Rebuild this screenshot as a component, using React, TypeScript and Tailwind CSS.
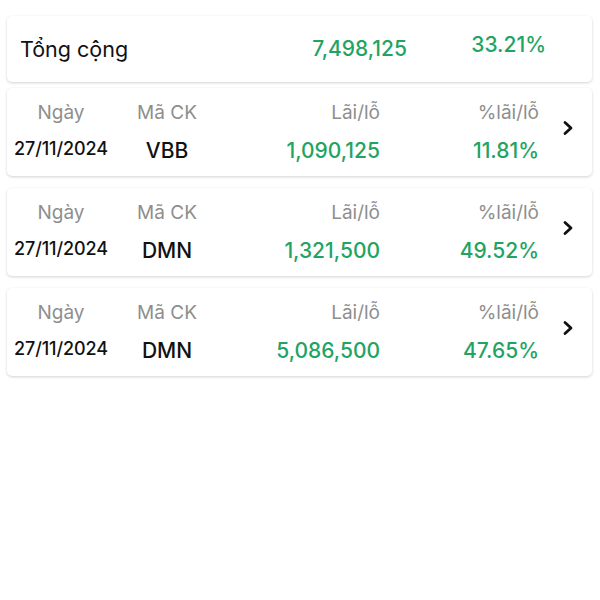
import React from "react";

type Row = {
  date: string;
  code: string;
  pnl: string;
  pct: string;
};

const rows: Row[] = [
  { date: "27/11/2024", code: "VBB", pnl: "1,090,125", pct: "11.81%" },
  { date: "27/11/2024", code: "DMN", pnl: "1,321,500", pct: "49.52%" },
  { date: "27/11/2024", code: "DMN", pnl: "5,086,500", pct: "47.65%" },
];

const Chevron = () => (
  <svg width="12" height="16" viewBox="0 0 12 16" fill="none">
    <polyline
      points="3,2.5 9,8 3,13.5"
      stroke="#111"
      strokeWidth="2.8"
      strokeLinecap="round"
      strokeLinejoin="round"
    />
  </svg>
);

const Card = ({ children, className = "" }: { children: React.ReactNode; className?: string }) => (
  <div className={`ml-[7px] w-[585px] rounded-[5px] bg-white shadow-[0_1px_3px_rgba(0,0,0,0.18)] ${className}`}>
    {children}
  </div>
);

const TradeRow = ({ row }: { row: Row }) => (
  <Card className="flex h-[88px]">
    {/* labels + values */}
    <div className="flex flex-col pt-[12px]">
      <div className="flex h-[26px] items-center text-[19px] text-[#8e8e8e]">
        <div className="w-[108px] text-center">Ngày</div>
        <div className="w-[104px] text-center">Mã CK</div>
        <div className="w-[161px] text-right">Lãi/lỗ</div>
        <div className="w-[159px] text-right">%lãi/lỗ</div>
      </div>
      <div className="mt-[11px] flex h-[28px] items-center font-medium">
        <div className="w-[108px] pb-[6px] text-center text-[18px] tracking-[-0.1px] text-[#111]">{row.date}</div>
        <div className="w-[104px] text-center text-[21px] text-[#111]">{row.code}</div>
        <div className="w-[161px] text-right text-[21px] text-[#1fa463]">{row.pnl}</div>
        <div className="w-[159px] text-right text-[21px] text-[#1fa463]">{row.pct}</div>
      </div>
    </div>
    <div className="flex flex-1 items-start justify-center pl-[4px] pt-[32px]">
      <Chevron />
    </div>
  </Card>
);

export default function App() {
  return (
    <div
      className="h-[600px] w-[600px] bg-white pt-[16px]"
      style={{ fontFamily: 'Inter, "Liberation Sans", Arial, sans-serif' }}
    >
      {/* total */}
      <Card className="flex h-[66px] items-center">
        <div className="w-[212px] pl-[13px] text-[21.5px] text-[#111]">Tổng cộng</div>
        <div className="w-[188px] text-right text-[21px] font-medium text-[#1fa463]">7,498,125</div>
        <div className="mb-[8px] w-[139px] text-right text-[21px] font-medium text-[#1fa463]">33.21%</div>
      </Card>

      <div className="mt-[6px] flex flex-col gap-[12px]">
        {rows.map((r, i) => (
          <TradeRow key={i} row={r} />
        ))}
      </div>
    </div>
  );
}
